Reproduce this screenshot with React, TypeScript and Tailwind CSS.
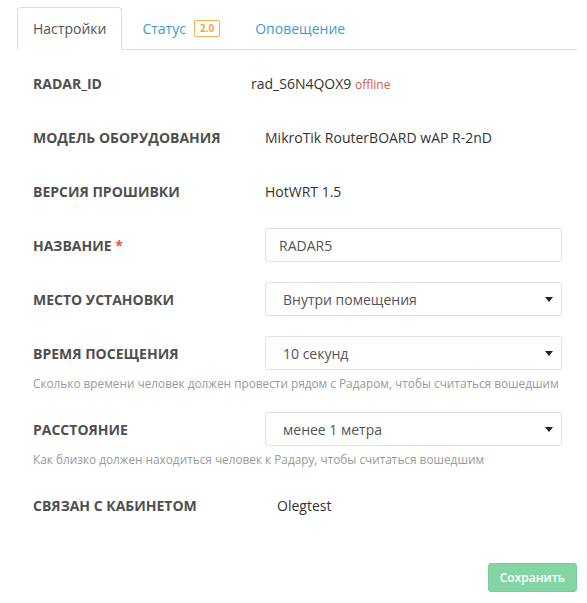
import { ReactNode } from "react"

const Caret = () => (
  <svg width="8" height="5" viewBox="0 0 8 5" className="block">
    <path d="M0 0 L8 0 L4 5 Z" fill="#222" />
  </svg>
)

const Row = ({ label, children, help }: { label: ReactNode; children: ReactNode; help?: string }) => (
  <div className="mb-[20px]">
    <div className="grid grid-cols-[232px_297px] items-center h-[34px]">
      <div className="text-[14px] font-bold text-[#4f4f4f] uppercase">{label}</div>
      <div>{children}</div>
    </div>
    {help ? (
      <div className="mt-[5px] h-[17px] text-[11.8px] leading-[17px] text-[#9a9a9a] whitespace-nowrap">{help}</div>
    ) : null}
  </div>
)

const Select = ({ value }: { value: string }) => (
  <div className="h-[34px] border border-[#e3e3e3] rounded-[3px] bg-white flex items-center justify-between pl-[17px] pr-[8px] text-[14px] text-[#555]">
    <span>{value}</span>
    <Caret />
  </div>
)

export default function App() {
  return (
    <div className="w-[587px] h-[603px] bg-white pl-[17px] pr-[10px] pt-[7px] flex flex-col font-['Open_Sans',sans-serif]">
      <div className="flex h-[43px] border-b border-[#dddddd] text-[14px]">
        <div className="-mb-px h-[43px] border border-[#dddddd] border-b-white rounded-t-[4px] px-[15px] flex items-center text-[#555] bg-white">
          Настройки
        </div>
        <div className="ml-[2px] pl-[18px] pr-[17px] flex items-center text-[#3e9bcb]">
          Статус
          <span className="ml-[8px] h-[17px] px-[5px] border border-[#f3b04c] rounded-[2px] text-[10px] font-bold text-[#f0a844] flex items-center leading-none">
            2.0
          </span>
        </div>
        <div className="ml-[2px] pl-[16px] flex items-center text-[#3e9bcb]">Оповещение</div>
      </div>

      <div className="px-[16px] pt-[16px]">
        <Row label="RADAR_ID">
          <div className="-ml-[14px] text-[14px] text-[#333]">
            rad_S6N4QOX9 <span className="text-[12px] text-[#e0584c]">offline</span>
          </div>
        </Row>
        <Row label="Модель оборудования">
          <div className="text-[14px] text-[#333]">MikroTik RouterBOARD wAP R-2nD</div>
        </Row>
        <Row label="Версия прошивки">
          <div className="text-[14px] text-[#333]">HotWRT 1.5</div>
        </Row>
        <Row
          label={
            <>
              Название <span className="text-[#e0584c]">*</span>
            </>
          }
        >
          <div className="h-[34px] border border-[#e3e3e3] rounded-[3px] flex items-center px-[13px] text-[14px] text-[#555]">
            RADAR5
          </div>
        </Row>
        <Row label="Место установки">
          <Select value="Внутри помещения" />
        </Row>
        <Row
          label="Время посещения"
          help="Сколько времени человек должен провести рядом с Радаром, чтобы считаться вошедшим"
        >
          <Select value="10 секунд" />
        </Row>
        <Row label="Расстояние" help="Как близко должен находиться человек к Радару, чтобы считаться вошедшим">
          <Select value="менее 1 метра" />
        </Row>
        <Row label="Связан с кабинетом">
          <div className="ml-[12px] text-[14px] text-[#333]">Olegtest</div>
        </Row>
      </div>

      <div className="flex justify-end mt-[21px]">
        <button className="h-[29px] px-[11px] rounded-[3px] bg-[#84d5a4] border border-[#7acd9b] text-white text-[12px] font-semibold">
          Сохранить
        </button>
      </div>
    </div>
  )
}
